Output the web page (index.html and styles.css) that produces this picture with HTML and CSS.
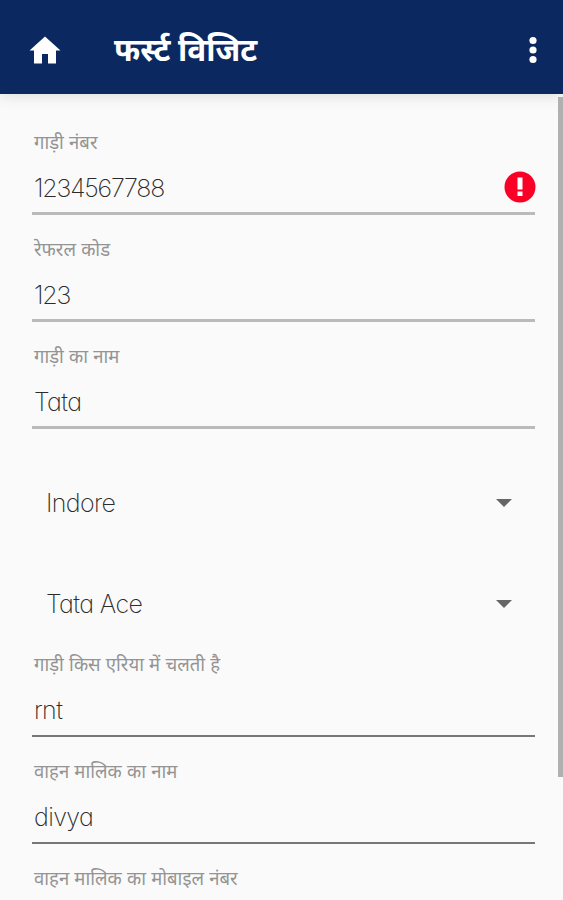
FILE: index.html
```
<!DOCTYPE html>
<html lang="hi">
<head>
    <meta charset="UTF-8">
    <title>फर्स्ट विजिट</title>
    <link rel="stylesheet" href="styles.css">
</head>
<body>
    <header class="app-bar">
        <svg class="home-icon" viewBox="0 0 32 28">
            <path d="M16 0.5L0.5 14.5H5V27.5H13V18H19V27.5H27V14.5H31.5Z"/>
        </svg>
        <h1 class="app-title">फर्स्ट विजिट</h1>
        <svg class="menu-icon" viewBox="0 0 8 28">
            <circle cx="4" cy="4.5" r="3.6"/>
            <circle cx="4" cy="14" r="3.6"/>
            <circle cx="4" cy="23.5" r="3.6"/>
        </svg>
    </header>

    <main class="visit-form">
        <div class="form-group">
            <div class="label"><span class="label-text">गाड़ी नंबर</span></div>
            <div class="value">
                <span class="value-text number">1234567788</span>
                <svg class="error-icon" viewBox="0 0 32 32">
                    <circle cx="16" cy="16" r="15.5"/>
                    <path d="M13.5 6.5h5v12h-5zM13.5 20.5h5v4.5h-5z"/>
                </svg>
            </div>
        </div>

        <div class="form-group">
            <div class="label"><span class="label-text">रेफरल कोड</span></div>
            <div class="value"><span class="value-text number">123</span></div>
        </div>

        <div class="form-group">
            <div class="label"><span class="label-text">गाड़ी का नाम</span></div>
            <div class="value"><span class="value-text">Tata</span></div>
        </div>

        <div class="spinner">
            <span class="value-text">Indore</span>
            <svg class="arrow" viewBox="0 0 16 8"><path d="M0 0H16L8 8Z"/></svg>
        </div>

        <div class="spinner">
            <span class="value-text">Tata Ace</span>
            <svg class="arrow" viewBox="0 0 16 8"><path d="M0 0H16L8 8Z"/></svg>
        </div>

        <div class="form-group active">
            <div class="label"><span class="label-text">गाड़ी किस एरिया में चलती है</span></div>
            <div class="value"><span class="value-text">rnt</span></div>
        </div>

        <div class="form-group active">
            <div class="label"><span class="label-text">वाहन मालिक का नाम</span></div>
            <div class="value"><span class="value-text">divya</span></div>
        </div>

        <div class="form-group last">
            <div class="label"><span class="label-text">वाहन मालिक का मोबाइल नंबर</span></div>
        </div>
    </main>

    <div class="scroll-thumb"></div>
</body>
</html>
```
FILE: styles.css
```
:root {
    --primary-color: #0b2861;
    --background-color: #fafafa;
    --label-color: #949494;
    --text-color: #2b2b2b;
}

* {
    margin: 0;
    padding: 0;
    box-sizing: border-box;
}

body {
    font-family: Inter, "Noto Sans Devanagari", "Noto Sans", sans-serif;
    background-color: var(--background-color);
    color: var(--text-color);
    height: 900px;
    overflow: hidden;
}

.app-bar {
    display: flex;
    align-items: center;
    height: 94px;
    padding: 6px 26px 0 29px;
    background-color: var(--primary-color);
    box-shadow: 0 2px 14px rgba(0, 0, 0, 0.12);
    color: white;
    fill: white;
}

.home-icon {
    width: 32px;
    height: 28px;
}

.app-title {
    margin-left: 53px;
    font-size: 31.5px;
    font-weight: 700;
    line-height: 40px;
    white-space: nowrap;
}

.menu-icon {
    width: 8px;
    height: 28px;
    margin-left: auto;
}

.visit-form {
    padding: 14px 28px 0 32px;
}

.form-group {
    height: 107px;
    padding: 20px 0 0 2px;
    border-bottom: 3px solid #bababa;
}

.form-group.active {
    border-bottom: 2px solid #777;
}

.form-group.last {
    height: 56px;
    border-bottom: none;
}

.label {
    height: 28px;
    font-size: 18.5px;
    line-height: 28px;
    color: var(--label-color);
    white-space: nowrap;
}

.value {
    display: flex;
    align-items: center;
    justify-content: space-between;
    height: 32px;
    margin-top: 16px;
}

/* light weight with the single-storey a */
.value-text {
    font-size: 25px;
    font-weight: 200;
    line-height: 32px;
    letter-spacing: -0.6px;
    font-feature-settings: "cv11";
    white-space: nowrap;
}

.value-text.number {
    letter-spacing: -1.2px;
}

.error-icon {
    width: 32px;
    height: 32px;
    margin: -2px -1px 0 0;
    fill: #fb0026;
}

.error-icon path {
    fill: white;
}

.spinner {
    display: flex;
    align-items: center;
    justify-content: space-between;
    height: 52px;
    margin-top: 48px;
    padding: 0 23px 0 14px;
}

.spinner + .spinner {
    margin-top: 49px;
}

.arrow {
    width: 16px;
    height: 8px;
    fill: #666;
}

.scroll-thumb {
    position: absolute;
    top: 97px;
    right: 0;
    width: 5px;
    height: 680px;
    background-color: #b0b0b0;
}
```
